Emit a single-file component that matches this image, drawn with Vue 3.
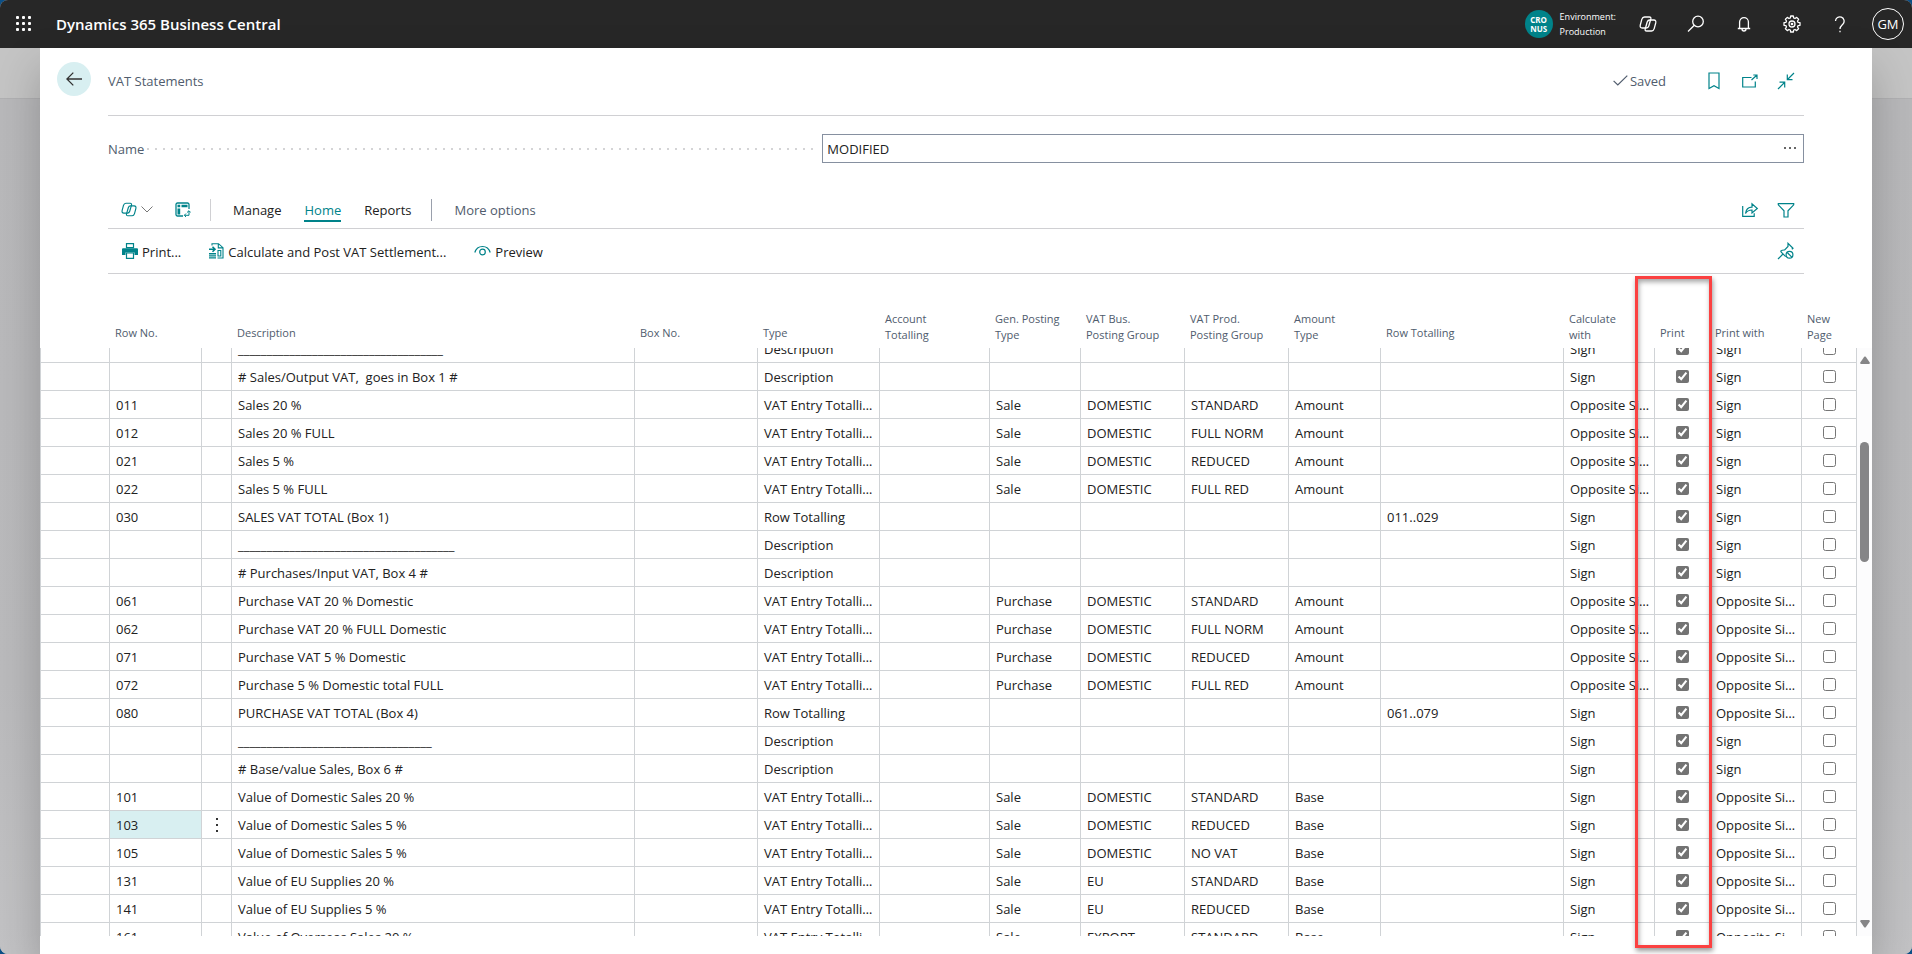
<script setup>
import { onMounted, ref } from 'vue'

const columns = [
  { key: 'gutter', label: '', cls: 'c-gutter' },
  { key: 'no', label: 'Row No.', cls: 'c-no' },
  { key: 'menu', label: '', cls: 'c-menu' },
  { key: 'desc', label: 'Description', cls: 'c-desc' },
  { key: 'box', label: 'Box No.', cls: 'c-box' },
  { key: 'type', label: 'Type', cls: 'c-type' },
  { key: 'account', label: 'Account\nTotalling', cls: 'c-account' },
  { key: 'gen', label: 'Gen. Posting\nType', cls: 'c-gen' },
  { key: 'bus', label: 'VAT Bus.\nPosting Group', cls: 'c-group' },
  { key: 'prod', label: 'VAT Prod.\nPosting Group', cls: 'c-group' },
  { key: 'amount', label: 'Amount\nType', cls: 'c-amount' },
  { key: 'totalling', label: 'Row Totalling', cls: 'c-totalling' },
  { key: 'calc', label: 'Calculate\nwith', cls: 'c-calc' },
  { key: 'print', label: 'Print', cls: 'c-check' },
  { key: 'printWith', label: 'Print with', cls: 'c-with' },
  { key: 'newPage', label: 'New\nPage', cls: 'c-check' },
]

const ENTRY = 'VAT Entry Totalling'
const OPP = 'Opposite Sign'
const text = (desc) => ({ desc, type: 'Description', calc: 'Sign', printWith: 'Sign' })
const entry = (no, desc, gen, bus, prod, amount, calc, printWith) =>
  ({ no, desc, type: ENTRY, gen, bus, prod, amount, calc, printWith })

const rows = [
  text('_'.repeat(36)),
  text('# Sales/Output VAT,  goes in Box 1 #'),
  entry('011', 'Sales 20 %', 'Sale', 'DOMESTIC', 'STANDARD', 'Amount', OPP, 'Sign'),
  entry('012', 'Sales 20 % FULL', 'Sale', 'DOMESTIC', 'FULL NORM', 'Amount', OPP, 'Sign'),
  entry('021', 'Sales 5 %', 'Sale', 'DOMESTIC', 'REDUCED', 'Amount', OPP, 'Sign'),
  entry('022', 'Sales 5 % FULL', 'Sale', 'DOMESTIC', 'FULL RED', 'Amount', OPP, 'Sign'),
  { no: '030', desc: 'SALES VAT TOTAL (Box 1)', type: 'Row Totalling', totalling: '011..029', calc: 'Sign', printWith: 'Sign' },
  text('_'.repeat(38)),
  text('# Purchases/Input VAT, Box 4 #'),
  entry('061', 'Purchase VAT 20 % Domestic', 'Purchase', 'DOMESTIC', 'STANDARD', 'Amount', OPP, OPP),
  entry('062', 'Purchase VAT 20 % FULL Domestic', 'Purchase', 'DOMESTIC', 'FULL NORM', 'Amount', OPP, OPP),
  entry('071', 'Purchase VAT 5 % Domestic', 'Purchase', 'DOMESTIC', 'REDUCED', 'Amount', OPP, OPP),
  entry('072', 'Purchase 5 % Domestic total FULL', 'Purchase', 'DOMESTIC', 'FULL RED', 'Amount', OPP, OPP),
  { no: '080', desc: 'PURCHASE VAT TOTAL (Box 4)', type: 'Row Totalling', totalling: '061..079', calc: 'Sign', printWith: OPP },
  text('_'.repeat(34)),
  text('# Base/value Sales, Box 6 #'),
  entry('101', 'Value of Domestic Sales 20 %', 'Sale', 'DOMESTIC', 'STANDARD', 'Base', 'Sign', OPP),
  { ...entry('103', 'Value of Domestic Sales 5 %', 'Sale', 'DOMESTIC', 'REDUCED', 'Base', 'Sign', OPP), selected: true },
  entry('105', 'Value of Domestic Sales 5 %', 'Sale', 'DOMESTIC', 'NO VAT', 'Base', 'Sign', OPP),
  entry('131', 'Value of EU Supplies 20 %', 'Sale', 'EU', 'STANDARD', 'Base', 'Sign', OPP),
  entry('141', 'Value of EU Supplies 5 %', 'Sale', 'EU', 'REDUCED', 'Base', 'Sign', OPP),
  entry('161', 'Value of Overseas Sales 20 %', 'Sale', 'EXPORT', 'STANDARD', 'Base', 'Sign', OPP),
]

const scroller = ref(null)
onMounted(() => { scroller.value.scrollTop = 13 })
</script>

<template>
  <div class="app">
    <header class="topbar">
      <button class="waffle" aria-label="App launcher">
        <svg width="16" height="16" viewBox="0 0 16 16" fill="#fff">
          <template v-for="y in 3" :key="y">
            <rect v-for="x in 3" :key="x" :x="(x - 1) * 6" :y="(y - 1) * 6" width="3" height="3" rx="1" />
          </template>
        </svg>
      </button>
      <a href="#" class="brand">Dynamics 365 Business Central</a>
      <div class="company">
        <span class="badge"><span>CRO</span><span>NUS</span></span>
        <span class="env">Environment:<br>Production</span>
      </div>
      <button class="top-btn" aria-label="Copilot">
        <svg width="18" height="16" viewBox="0 0 18 16" fill="none" stroke="#fff" stroke-width="1.3">
          <path d="M5.500 1H10.300Q12.300 1 11.800 3L9.800 10Q9.200 12 7.200 12H3.200Q.6 12 1.300 9L2.800 3.400Q3.500 1 5.500 1z" />
          <path d="M12.500 15H7.700Q5.700 15 6.200 13L8.200 6Q8.800 4 10.800 4H14.800Q17.400 4 16.700 7L15.200 12.600Q14.500 15 12.500 15z" />
        </svg>
      </button>
      <button class="top-btn" aria-label="Search">
        <svg width="18" height="18" viewBox="0 0 18 18" fill="none" stroke="#fff" stroke-width="1.3">
          <circle cx="11" cy="6.500" r="5.300" /><path d="M7.300 10.300L1 16.500" />
        </svg>
      </button>
      <button class="top-btn" aria-label="Notifications">
        <svg width="14" height="16" viewBox="0 0 14 16" fill="none" stroke="#fff" stroke-width="1.300">
          <path d="M2.600 12.300V6a4.400 4.400 0 0 1 8.800 0v6.300M.8 12.500h12.400M5 13a2 2 0 0 0 4 0" />
        </svg>
      </button>
      <button class="top-btn" aria-label="Settings">
        <svg width="18" height="18" viewBox="0 0 18 18" fill="none" stroke="#fff" stroke-width="1.300" stroke-linejoin="round">
          <path d="M7.700 1h2.600l.4 2 1.300.5 1.700-1.100 1.900 1.900L14.500 6l.5 1.300 2 .4v2.600l-2 .4-.5 1.300 1.100 1.700-1.900 1.900-1.700-1.100-1.300.5-.4 2H7.700l-.4-2-1.300-.5-1.700 1.100-1.900-1.900L3.500 12 3 10.700l-2-.4V7.700l2-.4L3.500 6 2.400 4.300l1.900-1.900L6 3.500 7.300 3z" />
          <circle cx="9" cy="9" r="3" /><circle cx="9" cy="9" r=".7" />
        </svg>
      </button>
      <button class="top-btn" aria-label="Help">
        <svg width="12" height="17" viewBox="0 0 12 17" fill="none" stroke="#fff" stroke-width="1.300">
          <path d="M1.500 5a4.300 4.300 0 1 1 7.500 3C7.300 9.600 6 10.300 6 13" /><path d="M6 14.800v1.500" />
        </svg>
      </button>
      <button class="top-btn" aria-label="Account"><span class="avatar">GM</span></button>
    </header>

    <div class="backdrop">
      <main class="dialog">
        <div class="title-row">
          <button class="back" aria-label="Back">
            <svg width="16" height="14" viewBox="0 0 16 14" fill="none" stroke="#333" stroke-width="1.300">
              <path d="M16 7H1M7.300 .6L.9 7l6.400 6.400" />
            </svg>
          </button>
          <h1>VAT Statements</h1>
          <span class="saved">
            <svg width="15" height="11" viewBox="0 0 15 11" fill="none" stroke="#505c6d" stroke-width="1.200"><path d="M.6 5.800l4.200 4.200L14.300 .6" /></svg>
            Saved
          </span>
          <div class="icons title-icons">
            <button aria-label="Bookmark">
              <svg width="12" height="18" viewBox="0 0 12 18" fill="none" stroke="#00838a" stroke-width="1.200"><path d="M1 1h10v15.500L6 13.800 1 16.500z" /></svg>
            </button>
            <button aria-label="Open in new window">
              <svg width="18" height="14" viewBox="0 0 18 14" fill="none" stroke="#00838a" stroke-width="1.200"><path d="M10.500 3.500H1.700V13h12.600V7.500M10.500 6L16 1M12.300 1H16v4" /></svg>
            </button>
            <button aria-label="Collapse">
              <svg width="18" height="18" viewBox="0 0 18 18" fill="none" stroke="#00838a" stroke-width="1.200"><path d="M1 17l6.500-6.500M2.500 10.200h5.200V15.500M17 1l-6.500 6.500M10.300 2.500v5.200h5.200" /></svg>
            </button>
          </div>
        </div>

        <div class="field">
          <label for="name">Name</label>
          <span class="leader"></span>
          <div class="input-wrap">
            <input id="name" type="text" value="MODIFIED">
            <button class="assist" aria-label="Choose a value">
              <svg width="12" height="2" viewBox="0 0 12 2" fill="#666"><rect width="2" height="2" /><rect x="5" width="2" height="2" /><rect x="10" width="2" height="2" /></svg>
            </button>
          </div>
        </div>

        <nav class="tabs">
          <button class="copilot" aria-label="Copilot">
            <svg width="16" height="15" viewBox="0 0 18 16" fill="none" stroke="#00838a" stroke-width="1.300">
              <path d="M5.500 1H10.300Q12.300 1 11.800 3L9.800 10Q9.200 12 7.200 12H3.200Q.6 12 1.300 9L2.800 3.400Q3.500 1 5.500 1z" />
              <path d="M12.500 15H7.700Q5.700 15 6.200 13L8.200 6Q8.800 4 10.800 4H14.800Q17.400 4 16.700 7L15.200 12.600Q14.500 15 12.500 15z" />
            </svg>
            <svg width="12" height="7" viewBox="0 0 12 7" fill="none" stroke="#777"><path d="M.5 .5L6 6 11.500 .5" /></svg>
          </button>
          <button class="analyze" aria-label="Analysis mode">
            <svg width="16" height="16" viewBox="0 0 16 16" fill="none" stroke="#00838a" stroke-width="1.300">
              <path d="M8 14H2.500A1.500 1.500 0 0 1 1 12.500v-10A1.500 1.500 0 0 1 2.500 1h10A1.500 1.500 0 0 1 14 2.500V7" />
              <path d="M14 9v4.300H9.500M12 10.500L14 8.700l1.700 1.800M11 11.500l-1.700 1.800L11 15" stroke-width="1" />
              <path d="M2.500 2.700h2.700v2.600H2.500zM6.500 2.700h6v2.600h-6zM2.500 6.500h2.700v6H2.500z" fill="#00838a" stroke="none" />
            </svg>
          </button>
          <span class="sep"></span>
          <button class="tab">Manage</button>
          <button class="tab active">Home</button>
          <button class="tab last">Reports</button>
          <span class="sep dark"></span>
          <button class="tab more">More options</button>
          <div class="icons">
            <button aria-label="Share">
              <svg width="18" height="16" viewBox="0 0 18 16" fill="none" stroke="#00838a" stroke-width="1.200"><path d="M1.700 4v10.300h11.500v-3M4.500 11.500C5 7.500 7 5.200 11 5.200V1.800l5.300 4.700L11 11V8C8 8 6 9 4.500 11.500z" /></svg>
            </button>
            <button aria-label="Filter">
              <svg width="18" height="16" viewBox="0 0 18 16" fill="none" stroke="#00838a" stroke-width="1.200"><path d="M1.300 1.600h15.400v1.200L11 8.800V15H7V8.800L1.300 2.800z" /></svg>
            </button>
          </div>
        </nav>

        <div class="actions">
          <button class="action">
            <svg width="16" height="16" viewBox="0 0 16 16" fill="#00838a">
              <path d="M4.500 .6h7v4h-7z" fill="none" stroke="#00838a" stroke-width="1.200" />
              <path d="M1 5.300h14a1 1 0 0 1 1 1V12h-3.500V9.500h-9V12H0V6.300a1 1 0 0 1 1-1z" />
              <path d="M4.500 10h7v5.300h-7z" fill="none" stroke="#00838a" stroke-width="1.200" />
            </svg>
            <span>Print...</span>
          </button>
          <button class="action">
            <svg width="15" height="16" viewBox="0 0 15 16" fill="none" stroke="#00838a" stroke-width="1.100">
              <path d="M3 2.500V.7h6.500l4.500 4V15H8.500M9.300 .7v4.200H14" />
              <path d="M9 7.500h2.800v5.500H9z" />
              <path d="M0 6.200h5.500M3.500 3.700l2.500 2.500-2.500 2.500" stroke-width="1.600" />
              <path d="M0 10h7v1.500H0zM0 12.200h7v1.300H0zM0 14.200h7v1.300H0z" fill="#00838a" stroke="none" />
            </svg>
            <span>Calculate and Post VAT Settlement...</span>
          </button>
          <button class="action">
            <svg width="17" height="12" viewBox="0 0 17 12" fill="none" stroke="#00838a" stroke-width="1.200"><path d="M.8 7.500C2 3.500 5 1.500 8.500 1.500s6.500 2 7.700 6" /><circle cx="8.500" cy="7" r="2.800" /></svg>
            <span>Preview</span>
          </button>
          <div class="icons">
            <button aria-label="Unpin">
              <svg width="18" height="18" viewBox="0 0 18 18" fill="none" stroke="#00838a" stroke-width="1.200"><path d="M1 17l5-5M3.300 9.200l5.400 5.500M3.500 9.300c1.500-1.200 3-1.400 4.200-1.300l3.300-3.500V1.300L16 6.200 14.800 7.300" /><circle cx="12.500" cy="12.800" r="3.400" /><path d="M10.200 10.500l4.600 4.600" /></svg>
            </button>
          </div>
        </div>

        <section class="list">
          <div ref="scroller" class="scroller">
            <table>
              <colgroup><col v-for="c in columns" :key="c.key" :class="c.cls"></colgroup>
              <thead>
                <tr><th v-for="c in columns" :key="c.key" :class="{ two: c.label.includes('\n') }">{{ c.label }}</th></tr>
              </thead>
              <tbody>
                <tr v-for="(row, i) in rows" :key="i">
                  <td v-for="c in columns" :key="c.key" :class="{ current: row.selected && c.key === 'no', center: c.cls === 'c-check' || c.key === 'menu' }">
                    <input v-if="c.cls === 'c-check'" type="checkbox" :checked="c.key === 'print'" :aria-label="c.key === 'print' ? 'Print' : 'New Page'">
                    <button v-else-if="c.key === 'menu' && row.selected" class="row-menu" aria-label="Row actions">
                      <svg width="2" height="14" viewBox="0 0 2 14" fill="#333"><rect width="2" height="2" /><rect y="6" width="2" height="2" /><rect y="12" width="2" height="2" /></svg>
                    </button>
                    <template v-else>{{ row[c.key] }}</template>
                  </td>
                </tr>
              </tbody>
            </table>
          </div>
          <div class="scrollbar">
            <svg width="10" height="8" viewBox="0 0 10 8" fill="#858587"><path d="M4.200 .8L.3 6.500Q0 8 1 8h8q1 0 .7-1.500L5.800 .8Q5 0 4.200 .8z" /></svg>
            <div class="track"><span class="thumb"></span></div>
            <svg width="10" height="8" viewBox="0 0 10 8" fill="#858587"><path d="M4.200 7.200L.3 1.500Q0 0 1 0h8q1 0 .7 1.500L5.800 7.200Q5 8 4.200 7.200z" /></svg>
          </div>
          <div class="highlight"></div>
        </section>
      </main>
    </div>
  </div>
</template>

<style>
body { background: #0b4f86; }
</style>

<style scoped>
.app {
  height: 100vh;
  display: flex;
  flex-direction: column;
  overflow: hidden;
  border-radius: 8px;
  background: #b9b9bb;
  font: 13px/20px "Open Sans", "Noto Sans", sans-serif;
  color: #212121;
}
button { border: 0; padding: 0; background: none; font: inherit; color: inherit; display: flex; align-items: center; }
svg { flex: none; display: block; }

.topbar { height: 48px; flex: none; display: flex; align-items: center; background: #272727; color: #fff; }
.waffle { width: 56px; height: 48px; padding-left: 16px; }
.brand { flex: 1; color: #fff; text-decoration: none; font-size: 15px; font-weight: 600; }
.company { display: flex; align-items: center; gap: 7px; margin-right: 8px; }
.badge {
  width: 28px; height: 28px; border-radius: 50%; background: #00838a;
  display: flex; flex-direction: column; align-items: center; justify-content: center;
  font-size: 8px; line-height: 9px; font-weight: 700;
}
.env { font-size: 9px; line-height: 15px; font-weight: 500; white-space: nowrap; }
.top-btn { width: 48px; height: 48px; justify-content: center; }
.avatar { box-sizing: border-box; width: 32px; height: 32px; line-height: 31px; border: 1px solid #fff; border-radius: 50%; text-align: center; }

.backdrop {
  flex: 1; min-height: 0; display: flex; padding: 0 40px;
  background: linear-gradient(#c4c4c4 0 50px, #b0b0b2 50px 51px, #b8b8ba 51px, #bababc 70%, #c2c2c4);
}
.dialog {
  flex: 1; min-width: 0; display: flex; flex-direction: column; padding-bottom: 18px;
  background: #fff; box-shadow: 0 20px 40px rgba(0, 0, 0, .22);
}
.title-row { box-sizing: border-box; display: flex; align-items: center; height: 68px; padding-bottom: 3px; margin: 0 68px 0 17px; position: relative; }
.title-row::after { content: ""; position: absolute; left: 51px; right: 0; bottom: 0; border-bottom: 1px solid #d0d0d3; }
.back { width: 34px; height: 34px; margin: 0 17px 3px 0; border-radius: 50%; background: #d8eff1; justify-content: center; }
h1 { margin: 0; flex: 1; font-size: 13px; font-weight: 400; color: #505c6d; }
.saved { display: flex; align-items: center; gap: 2px; color: #505c6d; margin-right: 30px; }
.icons { display: flex; margin-left: auto; }
.icons button { width: 36px; height: 32px; justify-content: center; }

.field { display: flex; align-items: center; margin: 17px 68px 0; height: 30px; }
label { color: #505c6d; padding-top: 1px; }
.leader { flex: 1; height: 2px; margin: 1px 7px 0 3px; background: repeating-linear-gradient(90deg, #d4d4d6 0 2px, transparent 2px 8px); }
.input-wrap { box-sizing: border-box; width: calc(58% - 2px); height: 29px; display: flex; border: 1px solid #8690a0; }
input[type=text] { flex: 1; min-width: 0; border: 0; outline: 0; padding: 1px 4px 0; font: inherit; color: inherit; background: none; }
.assist { padding: 0 7px; }

.tabs { display: flex; align-items: center; height: 35px; margin: 29px 68px 0; padding-bottom: 1px; border-bottom: 1px solid #d0d0d3; }
.copilot { gap: 4px; margin: 0 22px 0 13px; }
.sep { width: 1px; height: 22px; margin: 0 22px 0 19px; background: #d0d0d3; }
.sep.dark { margin-left: 0; background: #9aa0ac; }
.tab { box-sizing: border-box; height: 24px; padding-top: 2px; margin-right: 23px; border-bottom: 2px solid transparent; }
.tab.active { color: #00838a; border-color: #00838a; }
.tab.last { margin-right: 20px; }
.tab.more { color: #505c6d; margin-right: 0; }

.actions { display: flex; align-items: center; height: 44px; margin: 0 68px; padding-left: 14px; border-bottom: 1px solid #d0d0d3; }
.action { gap: 4px; white-space: nowrap; margin-right: 28px; }
.action span { padding-top: 2px; }

.list { flex: 1; min-height: 0; display: flex; position: relative; }
.scroller { flex: 1; min-width: 0; overflow: hidden; }
table { width: 100%; table-layout: fixed; border-collapse: separate; border-spacing: 0; }
.c-gutter { width: 70px; }
.c-no { width: 92px; }
.c-menu { width: 30px; }
.c-desc { width: auto; }
.c-box { width: 123px; }
.c-type { width: 122px; }
.c-account { width: 110px; }
.c-gen { width: 91px; }
.c-group { width: 104px; }
.c-amount { width: 92px; }
.c-totalling { width: 183px; }
.c-calc { width: 91px; }
.c-check { width: 55px; }
.c-with { width: 92px; }
thead th {
  position: sticky; top: 0; z-index: 1; box-sizing: border-box; height: 74px;
  padding: 0 0 5px 5px; background: #fff; vertical-align: bottom; text-align: left;
  font-size: 11px; line-height: 20px; font-weight: 400; color: #505c6d; white-space: pre;
}
thead th.two { line-height: 16px; }
td {
  box-sizing: border-box; height: 28px; padding: 0 2px 0 6px;
  border-right: 1px solid #d0d3d6; border-bottom: 1px solid #d0d3d6;
  white-space: pre; overflow: hidden; text-overflow: ellipsis;
}
td:first-child { border-left: 1px solid #d0d3d6; }
td.current { background: #d8eff1; }
td.center { padding: 0; text-align: center; }
td input { display: block; width: 13px; height: 13px; margin: 0 auto; accent-color: #737373; }
.row-menu { height: 20px; margin: 0 auto; }

.scrollbar { width: 15px; margin-top: 74px; padding: 8px 0; box-sizing: border-box; display: flex; flex-direction: column; align-items: center; background: #fcfcfd; }
.track { flex: 1; width: 9px; padding-top: 78px; }
.thumb { display: block; height: 21%; min-height: 120px; width: 9px; border-radius: 5px; background: #858587; }

.highlight {
  position: absolute; z-index: 2; top: 2px; bottom: -12px; right: 160px; width: 77px; box-sizing: border-box;
  border: 3px solid #fb4141; pointer-events: none;
  box-shadow: 1px 3px 5px rgba(0, 0, 0, .4), inset 1px 3px 5px rgba(0, 0, 0, .35);
}
</style>
